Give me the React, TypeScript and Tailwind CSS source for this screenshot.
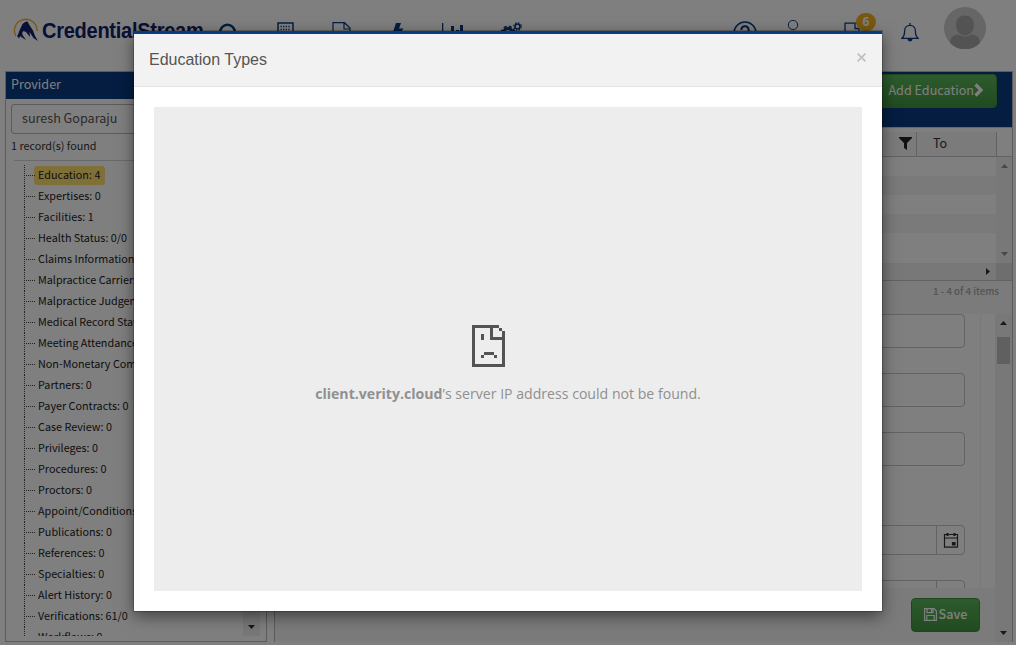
import React from "react";

const nodes = [
  "Education: 4", "Expertises: 0", "Facilities: 1", "Health Status: 0/0", "Claims Information: 0",
  "Malpractice Carriers: 0", "Malpractice Judgements: 0", "Medical Record Status: 0", "Meeting Attendance: 0",
  "Non-Monetary Comp: 0", "Partners: 0", "Payer Contracts: 0", "Case Review: 0", "Privileges: 0",
  "Procedures: 0", "Proctors: 0", "Appoint/Conditions: 0", "Publications: 0", "References: 0",
  "Specialties: 0", "Alert History: 0", "Verifications: 61/0", "Workflows: 0",
];

function Logo() {
  return (
    <div className="flex h-[24px] w-[192px] items-center">
      <svg width="27" height="24" viewBox="0 0 27 24" className="shrink-0">
        <path d="M3.800 18A11.300 11.300 0 1 1 25 13" fill="none" stroke="#f0ab22" strokeWidth="1.300" />
        <path d="M10.500 6 13.500 3.800 15.500 3.500 18 8l3 4.500 2 5.500 3 5-4.500-3-4-6 .500 5-4-5-2.500-1L8 17.500l-2.500.500 2-5.500z" fill="#10206b" />
        <path d="m5 18 5-5 .500 4 3.500 5-4-2.500-2-1.500-.800 2.500z" fill="#10206b" />
      </svg>
      <span className="ml-[3px] mt-[2px] origin-left scale-x-[0.932] font-['Liberation_Sans',sans-serif] text-[21.500px] font-bold leading-[24px] tracking-[-0.3px] text-[#10206b]">CredentialStream</span>
    </div>
  );
}

function TopBar() {
  return (
    <header className="flex h-[71px] shrink-0 items-start text-[#083b82]">
      <div className="ml-[12px] mt-[18px]"><Logo /></div>
      <svg className="ml-[13px] mt-[22px]" width="22" height="22" viewBox="0 0 22 22" fill="none" stroke="currentColor" strokeWidth="2.500"><circle cx="10.500" cy="10" r="7.300" /><path d="m16 15 5 5" /></svg>
      <svg className="ml-[38px] mt-[22px]" width="17" height="22" viewBox="0 0 17 22" fill="none" stroke="currentColor"><path d="M1 1h15v20H1z" strokeWidth="1.500" /><path d="M3.500 4.500h10M3.500 7.500h10M3.500 10.500h10" strokeWidth="1.300" strokeDasharray="1.300 1.300" /></svg>
      <svg className="ml-[38px] mt-[22px]" width="19" height="22" viewBox="0 0 19 22" fill="none" stroke="currentColor" strokeWidth="1.200"><path d="M1 21V.700h11.500L18 6v15zM12 1v6h6" /></svg>
      <svg className="ml-[41px] mt-[23px]" width="14" height="20" viewBox="0 0 14 20" fill="currentColor"><path d="M4 0h5L7 5.500h4.500L3 18l2-9H1z" /></svg>
      <svg className="ml-[36px] mt-[23px]" width="24" height="20" viewBox="0 0 24 20" fill="currentColor"><path d="M0 0h1.300v17H24v1.500H0zM9 3h3v12H9zM14 7h3v8h-3zM18 2h3v13h-3z" /></svg>
      <svg className="ml-[34px] mt-[22px]" width="25" height="22" viewBox="0 0 25 22" fill="none" stroke="currentColor"><circle cx="8" cy="11" r="4.500" strokeWidth="3" /><circle cx="8" cy="11" r="6.500" strokeWidth="2" strokeDasharray="3 2.100" /><circle cx="17.500" cy="4.500" r="2.500" strokeWidth="1.600" /><circle cx="17.500" cy="4.500" r="3.800" strokeWidth="1.200" strokeDasharray="1.500 1.500" /></svg>
      <svg className="ml-[208px] mt-[21px]" width="24" height="24" viewBox="0 0 24 24" fill="none" stroke="currentColor" strokeWidth="1.500"><circle cx="12" cy="12" r="11" /><path d="M8.300 9a3.700 3.700 0 1 1 5.500 3.200c-1.500.8-1.800 1.500-1.800 3" strokeWidth="2" /></svg>
      <svg className="ml-[26px] mt-[20px]" width="20" height="24" viewBox="0 0 20 24" fill="none" stroke="currentColor"><circle cx="10" cy="5" r="4.700" /><path d="M2 22c0-12 16-12 16 0z" /></svg>
      <div className="relative ml-[41px] mt-[22px] h-[20px] w-[34px]">
        <svg width="20" height="20" viewBox="0 0 20 20" fill="none" stroke="currentColor" strokeWidth="1.300"><path d="M1 1.200h14M1 .700v12h14V7M11 2v4.500h5" /></svg>
        <span className="absolute left-[12px] top-[-9px] flex h-[18px] w-[20px] items-center justify-center rounded-[9px] bg-[#f7b021] font-['Open_Sans',sans-serif] text-[12px] font-bold leading-none text-white">6</span>
      </div>
      <svg className="ml-[23px] mt-[23px]" width="18" height="20" viewBox="0 0 18 20" fill="none" stroke="currentColor" strokeWidth="1.300"><path d="M9 0v2M.800 15.400c2-1.700 2.800-4 2.800-7.500 0-7.400 10.800-7.400 10.800 0 0 3.500.8 5.800 2.800 7.500z" /><path d="M6.500 16h5a2.500 2.500 0 0 1-5 0z" fill="currentColor" stroke="none" /></svg>
      <svg className="ml-[25px] mt-[7px]" width="42" height="42" viewBox="0 0 42 42"><circle cx="21" cy="21" r="21" fill="#ccc" /><path d="M21 8.500c5.500 0 9 4 9 9.500 0 6-4 10.500-9 10.500s-9-4.500-9-10.500c0-5.500 3.500-9.500 9-9.500zM6 36c0-5 3.500-8.500 8.500-8.500 4 2.600 9 2.600 13 0 5 0 8.500 3.500 8.500 8.500a21 21 0 0 1-30 0z" fill="#a6a6a6" /></svg>
    </header>
  );
}

function ProviderPanel() {
  return (
    <aside className="flex h-[571px] w-[262px] shrink-0 flex-col border border-[#b8b8b8]">
      <h2 className="h-[27px] shrink-0 bg-[#083b82] pl-[5px] text-[12.600px] leading-[24px] text-white">Provider</h2>
      <div className="ml-[5px] mt-[5px] h-[30px] w-[240px] shrink-0 rounded-[3px] border border-[#b8b8b8] pl-[10px] text-[12.600px] leading-[26px] text-[#555]">suresh Goparaju</div>
      <div className="h-[26px] shrink-0 pl-[5px] text-[10.800px] leading-[23px] text-[#333]">1 record(s) found</div>
      <div className="ml-[8px] flex h-[476px] w-[246px] shrink-0 overflow-hidden border-t border-[#d5d5d5]">
        <ul className="ml-[10px] mt-[4px] w-[219px] shrink-0">
          {nodes.map((label, i) => (
            <li key={label} className="relative flex h-[21px] items-center whitespace-nowrap pl-[10px]">
              <span className="absolute left-0 top-0 h-[21px] border-l border-dotted border-[#444]" />
              <span className="absolute left-0 top-[10px] w-[11px] border-t border-dotted border-[#444]" />
              <span className={i === 0 ? "h-[19px] rounded-[3px] bg-[#ffe070] pl-[4px] pr-[5px] text-[10.800px] leading-[17px] text-[#222]" : "h-[19px] px-[4px] text-[10.800px] leading-[17px] text-[#222]"}>{label}</span>
            </li>
          ))}
        </ul>
        <div className="flex w-[17px] shrink-0 items-end justify-center bg-[#f1f1f1] pb-[7px]"><Arrow dir="down" /></div>
      </div>
    </aside>
  );
}

function Arrow({ dir, light }: { dir: "up" | "down" | "right"; light?: boolean }) {
  const d = dir === "up" ? "M0 4h7L3.500 0z" : dir === "down" ? "M0 0h7L3.500 4z" : "M0 0v7l4-3.500z";
  return <svg className="shrink-0" width={dir === "right" ? 4 : 7} height={dir === "right" ? 7 : 4} fill={light ? "#909090" : "#303030"}><path d={d} /></svg>;
}

function Calendar() {
  return (
    <svg width="16" height="17" viewBox="0 0 16 17" fill="none" stroke="#303030" strokeWidth="1.200"><path d="M1.500 2.500h13v12.700h-13zM1.500 6h13" /><path d="M4.500 1v3M11.500 1v3" strokeWidth="2" /><path d="M9.500 10.500h2.500v2.500H9.500z" fill="#303030" /></svg>
  );
}

function EducationPanel() {
  return (
    <main className="ml-[7px] flex h-[571px] w-[739px] shrink-0 flex-col border border-[#b8b8b8]">
      <div className="flex h-[55px] shrink-0 justify-end bg-[#083b82] pr-[15px] pt-[2px]">
        <button className="flex h-[34px] w-[130px] items-center justify-end rounded-[4px] border border-[#419641] bg-linear-to-b from-[#5cb85c] to-[#419641] pr-[12px] text-[12.600px] text-white">
          <span className="pb-[2px] leading-[30px]">Add Education</span>
          <svg className="mb-[2px]" width="10" height="14" viewBox="0 0 10 14" fill="none" stroke="currentColor" strokeWidth="3.200"><path d="m1.500 1.500 5.500 5.500-5.500 5.500" /></svg>
        </button>
      </div>
      <div className="h-[5px] shrink-0 border-t border-[#ccc]" />
      <div className="flex h-[25px] shrink-0 justify-end border-b border-[#c5c5c5] pr-[15px] text-[12.600px] text-[#333]">
        <div className="flex w-[100px] items-center justify-end border-r border-[#c5c5c5] bg-[#f6f6f6] pb-[2px] pr-[4px]">
          <svg width="13" height="13" viewBox="0 0 13 13" fill="#222"><path d="M0 0h13v1L8 6v7l-3-2V6L0 1z" /></svg>
        </div>
        <div className="w-[80px] border-r border-[#c5c5c5] bg-[#f6f6f6] pl-[16px] leading-[22px]">To</div>
      </div>
      <div className="flex h-[106px] shrink-0">
        <div className="flex-1">
          <div className="h-[19px] bg-white" /><div className="h-[19px] bg-[#f5f5f5]" /><div className="h-[19px] bg-white" /><div className="h-[19px] bg-[#f5f5f5]" />
        </div>
        <div className="flex w-[16px] flex-col items-center justify-between bg-[#f1f1f1] pb-[7px] pt-[7px]"><Arrow dir="up" light /><Arrow dir="down" light /></div>
      </div>
      <div className="flex h-[18px] shrink-0 border-b border-[#c5c5c5] bg-[#f1f1f1]">
        <div className="flex flex-1 items-center justify-end pr-[6px]"><Arrow dir="right" /></div>
        <div className="w-[16px] bg-[#dcdcdc]" />
      </div>
      <div className="h-[33px] shrink-0 bg-[#f6f6f6] pr-[13px] text-right text-[9.700px] font-medium leading-[20px] text-[#a8a8a8]">1 - 4 of 4 items</div>
      <div className="flex h-[328px] shrink-0">
        <div className="flex min-w-0 flex-1 flex-col">
          <div className="flex h-[274px] shrink-0 overflow-hidden">
            <div className="w-[706px] shrink-0 border-r border-[#f0f0f0] pl-[450px] pr-[15px]">
              <div className="h-[34px] rounded-[4px] border border-[#c7c7c7]" />
              <div className="mt-[25px] h-[34px] rounded-[4px] border border-[#c7c7c7]" />
              <div className="mt-[25px] h-[34px] rounded-[4px] border border-[#c7c7c7]" />
              <div className="mt-[59px] flex h-[30px] rounded-[4px] border border-[#c7c7c7]">
                <div className="flex-1" /><div className="flex w-[28px] items-center justify-center border-l border-[#c7c7c7]"><Calendar /></div>
              </div>
              <div className="mt-[25px] flex h-[30px] rounded-[4px] border border-[#c7c7c7]">
                <div className="flex-1" /><div className="w-[28px] border-l border-[#c7c7c7]" />
              </div>
            </div>
          </div>
          <div className="flex flex-1 justify-end bg-[#f6f6f6] pr-[15px] pt-[10px]">
            <button className="flex h-[34px] w-[69px] items-center justify-center gap-[2px] rounded-[4px] border border-[#3e8f3e] bg-linear-to-b from-[#5cb85c] to-[#419641] pb-[2px] text-[12.600px] font-medium text-white">
              <svg width="13" height="13" viewBox="0 0 13 13" fill="none" stroke="currentColor" strokeWidth="1.200"><path d="M.600.600h9.400l2.400 2.400v9.400H.600z" /><path d="M3 .600v4h6v-4M2.800 12.400V7.500h7.400v4.900M7.500 1v3" /></svg>
              <span className="leading-[30px]">Save</span>
            </button>
          </div>
        </div>
        <div className="flex w-[17px] flex-col items-center bg-[#f1f1f1] pb-[7px] pt-[7px]">
          <Arrow dir="up" />
          <div className="mt-[12px] h-[27px] w-[13px] bg-[#c1c1c1]" />
          <div className="flex-1" />
          <Arrow dir="down" />
        </div>
      </div>
    </main>
  );
}

function SadPage() {
  return (
    <svg className="mr-[40px]" width="33" height="42" viewBox="0 0 11 14" fill="#535353" shapeRendering="crispEdges">
      <path d="M0 0h9v1H0zM0 1h1v13H0zM1 13h10v1H1zM10 2h1v11h-1zM9 1h1v1H9zM6 1h1v4H6zM7 4h3v1H7zM3 3h1v2H3zM4 9h3.333v1H4zM3 10h1v1H3zM7.333 10h1v1h-1z" />
    </svg>
  );
}

export default function App() {
  return (
    <div className="relative flex h-[645px] w-[1016px] flex-col overflow-hidden bg-white font-['Noto_Sans_CJK_SC',sans-serif]">
      <TopBar />
      <div className="flex pl-[5px]">
        <ProviderPanel />
        <EducationPanel />
      </div>
      <div className="absolute inset-0 bg-black/50" />
      <section role="dialog" className="absolute left-[134px] top-[31px] flex h-[580px] w-[748px] flex-col border-t-[3px] border-[#083b82] bg-white shadow-[0_0_0_1px_rgba(0,0,0,0.2),0_5px_15px_rgba(0,0,0,0.5)]">
        <div className="flex h-[53px] shrink-0 justify-between border-b border-[#e5e5e5] bg-[#f2f2f2] pl-[15px] pr-[15px] font-['Liberation_Sans',sans-serif]">
          <h1 className="text-[16px] leading-[51px] text-[#555]">Education Types</h1>
          <button aria-label="Close" className="mt-[18px] flex h-[10px] w-[11px] items-center justify-center text-[#c0c0c0]">
            <svg width="9" height="9" viewBox="0 0 9 9" stroke="currentColor" strokeWidth="1.700"><path d="m.600.600 7.800 7.800M8.400.600.600 8.400" /></svg>
          </button>
        </div>
        <div className="mx-[20px] mt-[20px] flex h-[484px] flex-col items-center bg-[#ededed] pt-[218px]">
          <SadPage />
          <p className="mt-[17px] whitespace-nowrap font-['Open_Sans',sans-serif] text-[14.120px] leading-[20px] text-[#909090]"><b>client.verity.cloud</b>’s server IP address could not be found.</p>
        </div>
      </section>
    </div>
  );
}
